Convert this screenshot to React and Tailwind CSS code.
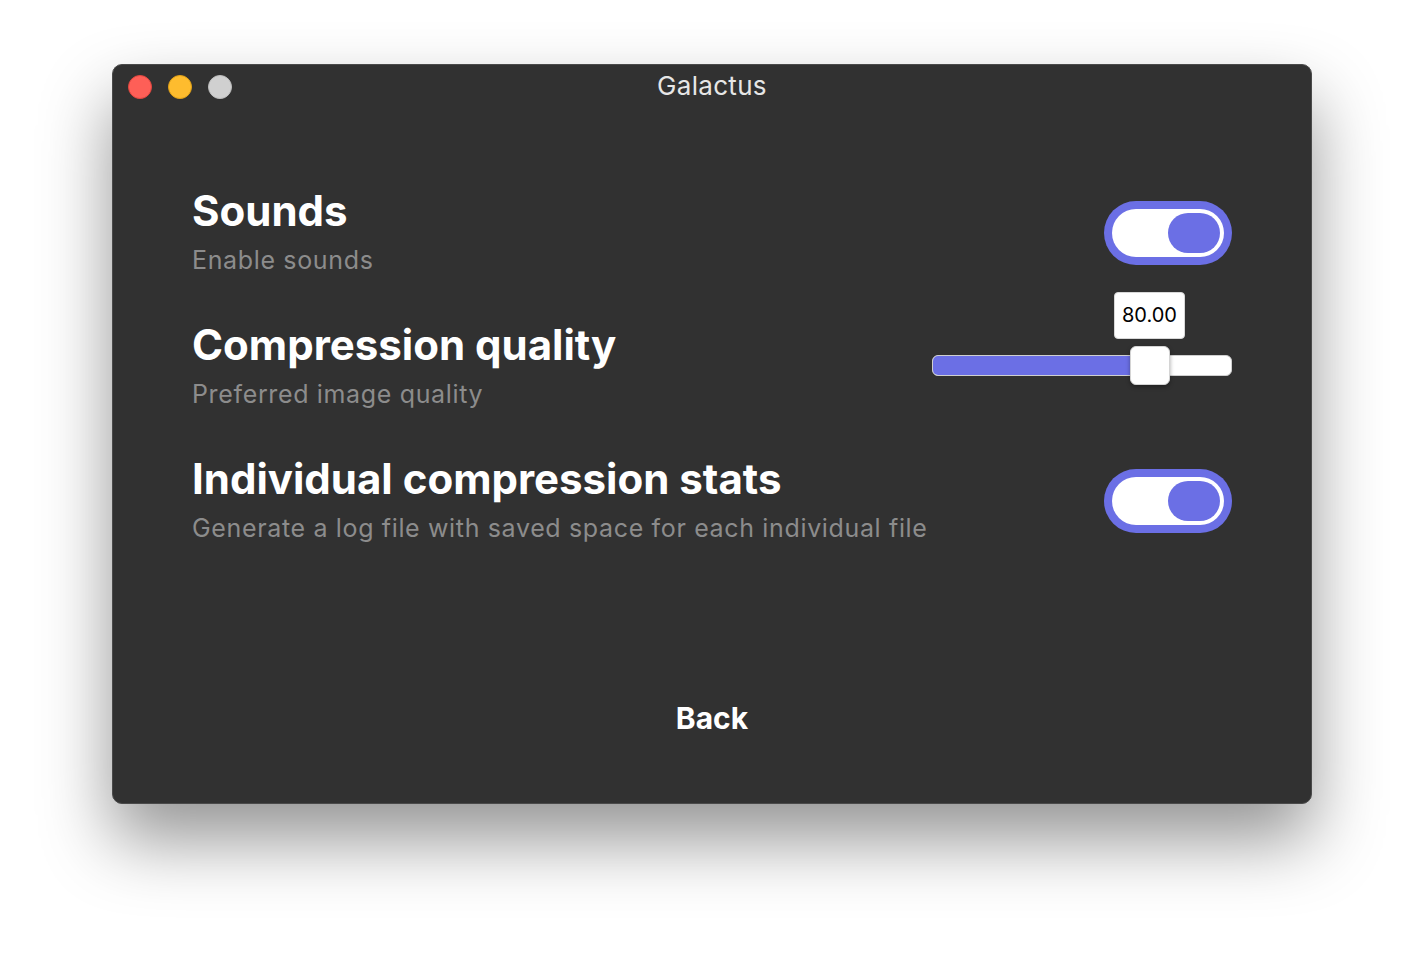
import React, { useState } from "react";

const Toggle = ({ on, onChange }) => (
  <button
    onClick={() => onChange(!on)}
    className="w-[128px] h-[64px] mt-[2px] rounded-full bg-[#6b6fe5] p-[8px] shrink-0"
  >
    <div
      className={
        "w-full h-full rounded-full bg-white p-[4px] flex " +
        (on ? "justify-end" : "justify-start")
      }
    >
      <div className="w-[52px] h-[40px] rounded-full bg-[#6b6fe5]"></div>
    </div>
  </button>
);

const Slider = ({ value }) => (
  <div className="relative w-[300px] h-[40px] flex items-center shrink-0">
    <div className="w-full h-[21px] rounded-[6px] bg-white border border-[#cfcfcf] overflow-hidden">
      <div className="h-full bg-[#6b6fe5] w-[203px]"></div>
    </div>
    {/* thumb */}
    <div className="absolute left-[198px] top-0 w-[40px] h-[39px] rounded-[6px] bg-white border border-[#d4d4d4] shadow-[0_2px_4px_rgba(0,0,0,0.35)]"></div>
    {/* tooltip */}
    <div className="absolute left-[182px] top-[-54px] w-[71px] h-[47px] rounded-[4px] bg-white border border-[#d8d8d8] flex items-center justify-center text-[20px] text-black font-['Inter',sans-serif]">
      {value.toFixed(2)}
    </div>
  </div>
);

const Row = ({ title, subtitle, children }) => (
  <div className="flex items-center justify-between">
    <div>
      <div className="text-[42px] leading-[48px] font-bold text-white">
        {title}
      </div>
      <div className="mt-[9px] text-[25px] leading-[32px] text-[#8c8c8c] tracking-[0.65px]">
        {subtitle}
      </div>
    </div>
    {children}
  </div>
);

export default function App() {
  const [sounds, setSounds] = useState(true);
  const [stats, setStats] = useState(true);

  return (
    <div className="w-[1424px] h-[964px] bg-white flex justify-center pt-[64px] font-['Inter',sans-serif]">
      <div className="w-[1200px] h-[740px] rounded-[10px] bg-[#313131] border border-[#4a4a4a] shadow-[0_36px_70px_rgba(0,0,0,0.42)] flex flex-col">
        {/* title bar */}
        <div className="relative h-[43px] flex items-center justify-center">
          <div className="absolute left-[15px] top-[10px] flex gap-[16px]">
            <div className="w-[24px] h-[24px] rounded-full bg-[#fe5f57] border border-[#e2463f]"></div>
            <div className="w-[24px] h-[24px] rounded-full bg-[#febc2e] border border-[#e1a116]"></div>
            <div className="w-[24px] h-[24px] rounded-full bg-[#d0d0d0] border border-[#bdbdbd]"></div>
          </div>
          <div className="text-[26px] text-[#e6e6e6] tracking-[0.3px] -mt-[2px]">Galactus</div>
        </div>

        <div className="px-[79px] pt-[79px] flex flex-col gap-[45px]">
          <Row title="Sounds" subtitle="Enable sounds">
            <Toggle on={sounds} onChange={setSounds} />
          </Row>
          <Row title="Compression quality" subtitle="Preferred image quality">
            <Slider value={80} />
          </Row>
          <Row
            title="Individual compression stats"
            subtitle="Generate a log file with saved space for each individual file"
          >
            <Toggle on={stats} onChange={setStats} />
          </Row>
        </div>

        <div className="mt-[156px] flex justify-center">
          <button className="text-[30px] leading-[36px] font-bold text-white">Back</button>
        </div>
      </div>
    </div>
  );
}
